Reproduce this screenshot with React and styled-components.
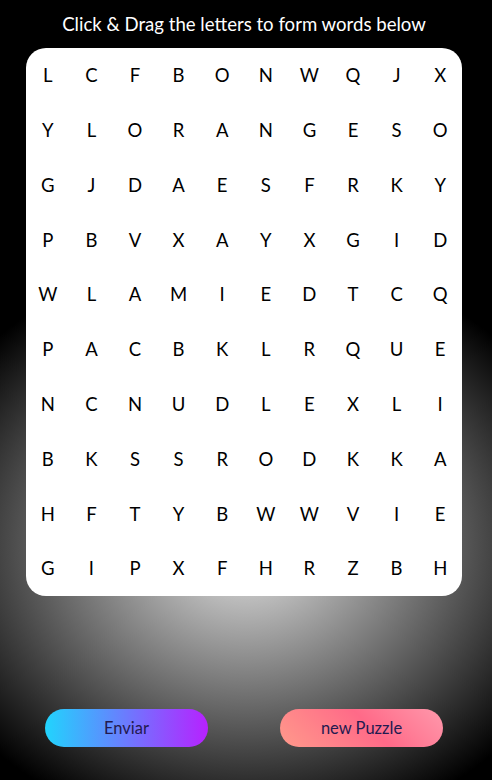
import React from "react";
import styled, { createGlobalStyle } from "styled-components";

const GlobalStyle = createGlobalStyle`
  html, body {
    margin: 0;
    padding: 0;
  }
  body {
    min-height: 780px;
    background-color: #000;
    background-image: radial-gradient(ellipse 350px 295px at 246px 545px, #e6e6e6 0%, #000 100%);
    background-repeat: no-repeat;
    font-family: "Lato", "Liberation Sans", sans-serif;
  }
`;

const Page = styled.main`
  width: 492px;
  min-height: 780px;
  box-sizing: border-box;
  padding-left: 26px;
  display: flex;
  flex-direction: column;
  align-items: flex-start;
`;

const Title = styled.h1`
  margin: 0;
  width: 436px;
  padding-top: 11px;
  height: 37px;
  box-sizing: border-box;
  color: #fff;
  font-size: 18.6px;
  font-weight: 400;
  line-height: 26px;
  text-align: center;
`;

const Board = styled.div`
  width: 436px;
  height: 548px;
  background: #fff;
  border-radius: 20px;
  display: grid;
  grid-template-columns: repeat(10, 1fr);
  grid-template-rows: repeat(10, 1fr);
  margin-top: 11px;
  user-select: none;
`;

const Cell = styled.span`
  display: flex;
  align-items: center;
  justify-content: center;
  color: #000;
  font-size: 18.5px;
  line-height: 1;
  cursor: pointer;
`;

const Actions = styled.div`
  width: 436px;
  box-sizing: border-box;
  padding: 0 19px;
  margin-top: 113px;
  display: flex;
  justify-content: space-between;
`;

const Button = styled.button`
  width: 163px;
  height: 38px;
  border: none;
  border-radius: 19px;
  background: ${(p) => p.$bg};
  color: #231a50;
  font-family: "Lato", "Liberation Sans", sans-serif;
  font-size: 16.5px;
  cursor: pointer;
  padding: 0;
`;

const rows = [
  "LCFBONWQJX",
  "YLORANGESO",
  "GJDAESFRKY",
  "PBVXAYXGID",
  "WLAMIEDTCQ",
  "PACBKLRQUE",
  "NCNUDLEXLI",
  "BKSSRODKKA",
  "HFTYBWWVIE",
  "GIPXFHRZBH",
];

export default function App() {
  return (
    <>
      <GlobalStyle />
      <Page>
        <Title>Click &amp; Drag the letters to form words below</Title>
        <Board>
          {rows.map((row, r) =>
            row.split("").map((ch, c) => <Cell key={`${r}-${c}`}>{ch}</Cell>)
          )}
        </Board>
        <Actions>
          <Button $bg="linear-gradient(90deg, #21D4FD 0%, #B721FF 100%)">Enviar</Button>
          <Button $bg="linear-gradient(45deg, #FF9A8B 0%, #FF6A88 55%, #FF99AC 100%)">new Puzzle</Button>
        </Actions>
      </Page>
    </>
  );
}
